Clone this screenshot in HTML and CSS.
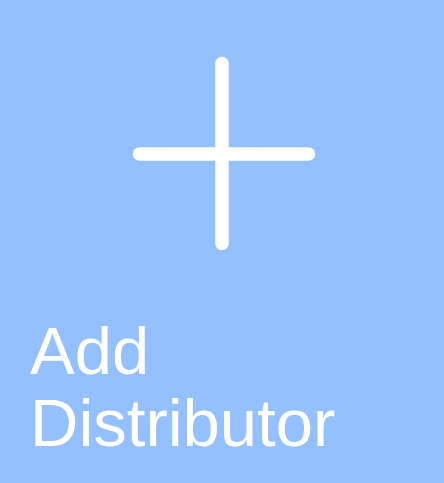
FILE: index.html
```html
<!DOCTYPE html>
<html>
<head>
<meta charset="utf-8">
<link rel="stylesheet" href="styles.css">
</head>
<body>
<div class="tile">
  <svg class="plus" width="200" height="200" viewBox="0 0 200 200">
    <line x1="99" y1="9.5" x2="99" y2="189.5" stroke="#fff" stroke-width="13.5" stroke-linecap="round"/>
    <line x1="16.5" y1="100" x2="185.5" y2="100" stroke="#fff" stroke-width="13.5" stroke-linecap="round"/>
  </svg>
  <div class="label">Add<br>Distributor</div>
</div>
</body>
</html>
```
FILE: styles.css
```css
html, body {
  margin: 0;
  padding: 0;
  background: #94c0ff;
}
.tile {
  width: 444px;
  height: 483px;
  box-sizing: border-box;
  padding-top: 54px;
  background: #94c0ff;
  overflow: hidden;
}
.plus {
  display: block;
  margin-left: 123px;
}
.label {
  margin-top: 61px;
  padding-left: 30px;
  color: #fff;
  font-family: "Liberation Sans", Arial, sans-serif;
  font-size: 67px;
  line-height: 72px;
}
```
